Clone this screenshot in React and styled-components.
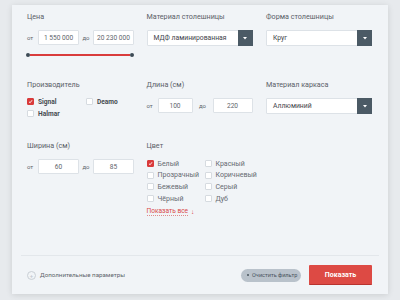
import React from 'react';
import styled, { createGlobalStyle } from 'styled-components';

const GlobalStyle = createGlobalStyle`
  html, body {
    margin: 0;
    padding: 0;
    background: #e7eaed;
    font-family: Roboto, "Liberation Sans", sans-serif;
  }
`;

const colors = [
  ['Белый', true],
  ['Красный', false],
  ['Прозрачный', false],
  ['Коричневый', false],
  ['Бежевый', false],
  ['Серый', false],
  ['Чёрный', false],
  ['Дуб', false],
];

const Check = ({ label, checked, bold }) => (
  <CheckRow>
    <Box $checked={checked}>
      {checked && (
        <svg width="5" height="5" viewBox="0 0 10 10">
          <path d="M2 5.5 L4.2 7.5 L8 2.5" stroke="#fff" strokeWidth="1.8" fill="none" />
        </svg>
      )}
    </Box>
    <CheckLabel $bold={bold}>{label}</CheckLabel>
  </CheckRow>
);

// fromW / toW are the input widths, gap is the width of the "до" slot
const Range = ({ from, to, fromW = 41, toW = 41, gap = 14 }) => (
  <RangeRow>
    <Small $w={11}>от</Small>
    <Input $w={fromW}>{from}</Input>
    <Small $w={gap} $center>до</Small>
    <Input $w={toW}>{to}</Input>
  </RangeRow>
);

const Select = ({ value }) => (
  <SelectBox>
    <SelectValue>{value}</SelectValue>
    <Arrow>
      <svg width="4" height="3" viewBox="0 0 4 3">
        <path d="M0 0 H4 L2 2.5 Z" fill="#fff" />
      </svg>
    </Arrow>
  </SelectBox>
);

const App = () => {
  return (
    <Page>
      <GlobalStyle />
      <Card>
        <Grid>
          <Cell>
            <Label>Цена</Label>
            <Range from="1 550 000" to="20 230 000" />
            <Slider>
              <Dot />
              <Track />
              <Dot />
            </Slider>
          </Cell>
          <Cell>
            <Label>Материал столешницы</Label>
            <Select value="МДФ ламинированная" />
          </Cell>
          <Cell>
            <Label>Форма столешницы</Label>
            <Select value="Круг" />
          </Cell>

          <Cell>
            <Label>Производитель</Label>
            <MakerGrid>
              <Check label="Signal" checked bold />
              <Check label="Deamo" bold />
              <Check label="Halmar" bold />
            </MakerGrid>
          </Cell>
          <Cell>
            <Label>Длина (см)</Label>
            <Range from="100" to="220" fromW={35} toW={40} gap={20} />
          </Cell>
          <Cell>
            <Label>Материал каркаса</Label>
            <Select value="Аллюминий" />
          </Cell>

          <Cell>
            <Label>Ширина (см)</Label>
            <Range from="60" to="85" />
          </Cell>
          <Cell>
            <Label>Цвет</Label>
            <ColorGrid>
              {colors.map(([name, checked]) => (
                <Check key={name} label={name} checked={checked} />
              ))}
            </ColorGrid>
            <ShowAll>
              <ShowAllText>Показать все</ShowAllText>
              <span>↓</span>
            </ShowAll>
          </Cell>
          <Cell />
        </Grid>

        <Footer>
          <More>
            <PlusCircle>+</PlusCircle>
            Дополнительные параметры
          </More>
          <Actions>
            <ClearButton>
              <ClearDot />
              Очистить фильтр
            </ClearButton>
            <ShowButton>Показать</ShowButton>
          </Actions>
        </Footer>
      </Card>
    </Page>
  );
};

export default App;

const Page = styled.div`
  width: 400px;
  height: 300px;
  padding: 5px 12px 6px;
  box-sizing: border-box;
  overflow: hidden;
`;

const Card = styled.div`
  height: 289px;
  background: #f1f4f7;
  box-shadow: 0 1px 6px rgba(0, 0, 0, 0.12);
  display: flex;
  flex-direction: column;
  box-sizing: border-box;
`;

const Grid = styled.div`
  display: grid;
  grid-template-columns: 106px 106px 107px;
  grid-template-rows: 68px 61px 110px;
  column-gap: 13.5px;
  padding: 7px 15px 0;
`;

const Cell = styled.div`
  display: flex;
  flex-direction: column;
  align-items: flex-start;
`;

const Label = styled.div`
  font-size: 7.2px;
  line-height: 10px;
  color: #5a6067;
  margin-bottom: 8px;
`;

const RangeRow = styled.div`
  display: flex;
  align-items: center;
`;

const Small = styled.span`
  font-size: 6px;
  color: #60656b;
  width: ${(p) => p.$w}px;
  text-align: ${(p) => (p.$center ? 'center' : 'left')};
`;

const Input = styled.div`
  width: ${(p) => p.$w}px;
  height: 15px;
  box-sizing: border-box;
  background: #fff;
  border: 1px solid #dde2e7;
  border-radius: 1px;
  font-size: 6.6px;
  color: #60656b;
  display: flex;
  align-items: center;
  justify-content: center;
`;

const Slider = styled.div`
  display: flex;
  align-items: center;
  width: 108px;
  margin-top: 8px;
  margin-left: -1px;
`;

const Dot = styled.div`
  width: 4px;
  height: 4px;
  border-radius: 50%;
  background: #3d4a55;
  flex-shrink: 0;
`;

const Track = styled.div`
  flex: 1;
  height: 1.5px;
  background: #d93c3c;
`;

const SelectBox = styled.div`
  width: 106px;
  height: 16px;
  display: flex;
  box-sizing: border-box;
  background: #fff;
  border: 1px solid #dde2e7;
  border-radius: 1px;
`;

const SelectValue = styled.div`
  flex: 1;
  font-size: 6.8px;
  color: #3f444a;
  display: flex;
  align-items: center;
  padding-left: 6px;
`;

const Arrow = styled.div`
  width: 15px;
  margin: -1px -1px -1px 0;
  background: #4b5a65;
  display: flex;
  align-items: center;
  justify-content: center;
`;

const MakerGrid = styled.div`
  display: grid;
  grid-template-columns: 59px auto;
  row-gap: 5px;
`;

const CheckRow = styled.div`
  display: flex;
  align-items: center;
  height: 7px;
`;

const Box = styled.div`
  width: 7px;
  height: 7px;
  box-sizing: border-box;
  border-radius: 1px;
  background: ${(p) => (p.$checked ? '#d93a3a' : '#fff')};
  border: 1px solid ${(p) => (p.$checked ? '#d93a3a' : '#d6dbe0')};
  display: flex;
  align-items: center;
  justify-content: center;
  margin-right: 4px;
  flex-shrink: 0;
`;

const CheckLabel = styled.span`
  font-size: ${(p) => (p.$bold ? '6.6px' : '7px')};
  font-weight: ${(p) => (p.$bold ? 700 : 400)};
  color: ${(p) => (p.$bold ? '#454a50' : '#666b71')};
  white-space: nowrap;
`;

const ColorGrid = styled.div`
  display: grid;
  grid-template-columns: 58px auto;
  row-gap: 4.7px;
  margin-top: 1px;
`;

const ShowAll = styled.div`
  margin-top: 6px;
  font-size: 6.6px;
  color: #d94848;
  display: flex;
  gap: 3px;
`;

const ShowAllText = styled.span`
  border-bottom: 1px dotted #e08a8a;
  line-height: 7px;
`;

const Footer = styled.div`
  margin: auto 9px 0;
  border-top: 1px solid #e3e7eb;
  height: 38px;
  display: flex;
  align-items: center;
  justify-content: space-between;
  padding: 0 7px 0 6px;
`;

const More = styled.div`
  display: flex;
  align-items: center;
  font-size: 6.2px;
  color: #60656b;
`;

const PlusCircle = styled.span`
  width: 7px;
  height: 7px;
  border: 1px solid #c9cfd5;
  border-radius: 50%;
  margin-right: 4px;
  font-size: 6px;
  line-height: 7px;
  color: #c0c6cc;
  display: flex;
  align-items: center;
  justify-content: center;
`;

const Actions = styled.div`
  display: flex;
  align-items: center;
  gap: 8px;
`;

const ClearButton = styled.div`
  height: 13px;
  width: 60px;
  box-sizing: border-box;
  border-radius: 7px;
  background: #b9c2cb;
  font-size: 5.6px;
  color: #4a545e;
  display: flex;
  align-items: center;
  padding-left: 6px;
  gap: 3px;
`;

const ClearDot = styled.span`
  width: 2px;
  height: 2px;
  background: #4a545e;
  border-radius: 50%;
`;

const ShowButton = styled.div`
  width: 63px;
  height: 20px;
  box-sizing: border-box;
  background: #dd4a44;
  border-bottom: 1px solid #b8332e;
  border-radius: 1px;
  color: #fff;
  font-size: 7px;
  font-weight: 700;
  display: flex;
  align-items: center;
  justify-content: center;
`;
